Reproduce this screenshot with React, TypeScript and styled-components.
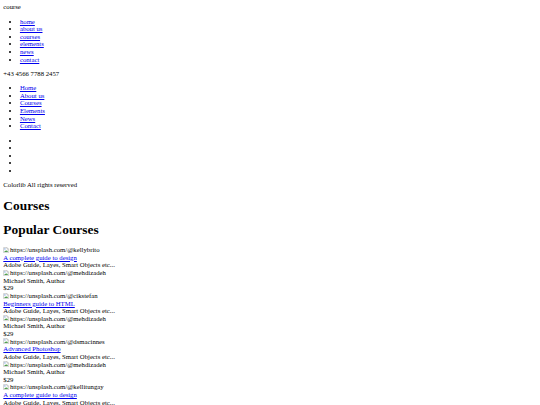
import React from "react";
import { createGlobalStyle, styled } from "styled-components";

// plain unstyled document, shown at ~0.415 of its real size
const GlobalStyle = createGlobalStyle`
	html, body {
		background: #fff;
	}
	body {
		margin: 3.32px;
		font-family: "Liberation Serif", "Times New Roman", serif;
		font-size: 6.73px;
		line-height: 7.64px;
		color: #000;
	}
	a {
		color: #0000ee;
		text-decoration: underline;
	}
`;

const Line = styled.div`
	height: 7.64px;
	white-space: nowrap;
`;

const List = styled.ul`
	margin: 6.64px 0;
	padding-left: 16.6px;
	list-style: disc;
`;

const Item = styled.li`
	height: 7.64px;
`;

const Heading = styled.h1`
	margin: 8.9px 0;
	font-size: 13.4px;
	line-height: 15.28px;
	font-weight: bold;
`;

const Broken = styled.span`
	svg {
		display: inline-block;
		width: 6.2px;
		height: 6.2px;
		margin-right: 0.4px;
		vertical-align: -0.8px;
	}
`;

const courses = [
	{ img: "kellybrito", title: "A complete guide to design" },
	{ img: "cikstefan", title: "Beginners guide to HTML" },
	{ img: "dsmacinnes", title: "Advanced Photoshop" },
	{ img: "kellitungay", title: "A complete guide to design" },
	{ img: "kellybrito", title: "Beginners guide to HTML" },
];

const smallNav = ["home", "about us", "courses", "elements", "news", "contact"];
const mainNav = ["Home", "About us", "Courses", "Elements", "News", "Contact"];

function BrokenImage({ alt }: { alt: string }) {
	return (
		<Broken>
			<svg viewBox="0 0 16 16">
				<path d="M1.5 1.5h9l4 4v9h-13z" fill="#fff" stroke="#8f8f8f" />
				<path d="M10.5 1.5v4h4" fill="#e8e8e8" stroke="#8f8f8f" />
				<path d="M3 13l3-4 2 2 2-3 3 5z" fill="#4f9d4a" />
				<circle cx="5" cy="5" r="1.6" fill="#5a8ed6" />
			</svg>
			{alt}
		</Broken>
	);
}

export default function App() {
	return (
		<>
			<GlobalStyle />
			<header>
				<Line>course</Line>
				<List>
					{smallNav.map((n) => (
						<Item key={n}><a href="#">{n}</a></Item>
					))}
				</List>
				<Line>+43 4566 7788 2457</Line>
				<List>
					{mainNav.map((n) => (
						<Item key={n}><a href="#">{n}</a></Item>
					))}
				</List>
				<List>
					{[0, 1, 2, 3, 4].map((i) => (
						<Item key={i} />
					))}
				</List>
				<Line>Colorlib All rights reserved</Line>
			</header>
			<Heading>Courses</Heading>
			<Heading>Popular Courses</Heading>
			{courses.map((c, i) => (
				<div key={i}>
					<Line><BrokenImage alt={`https://unsplash.com/@${c.img}`} /></Line>
					<Line><a href="#">{c.title}</a></Line>
					<Line>Adobe Guide, Layes, Smart Objects etc...</Line>
					<Line><BrokenImage alt="https://unsplash.com/@mehdizadeh" /></Line>
					<Line>Michael Smith, Author</Line>
					<Line>$29</Line>
				</div>
			))}
		</>
	);
}
